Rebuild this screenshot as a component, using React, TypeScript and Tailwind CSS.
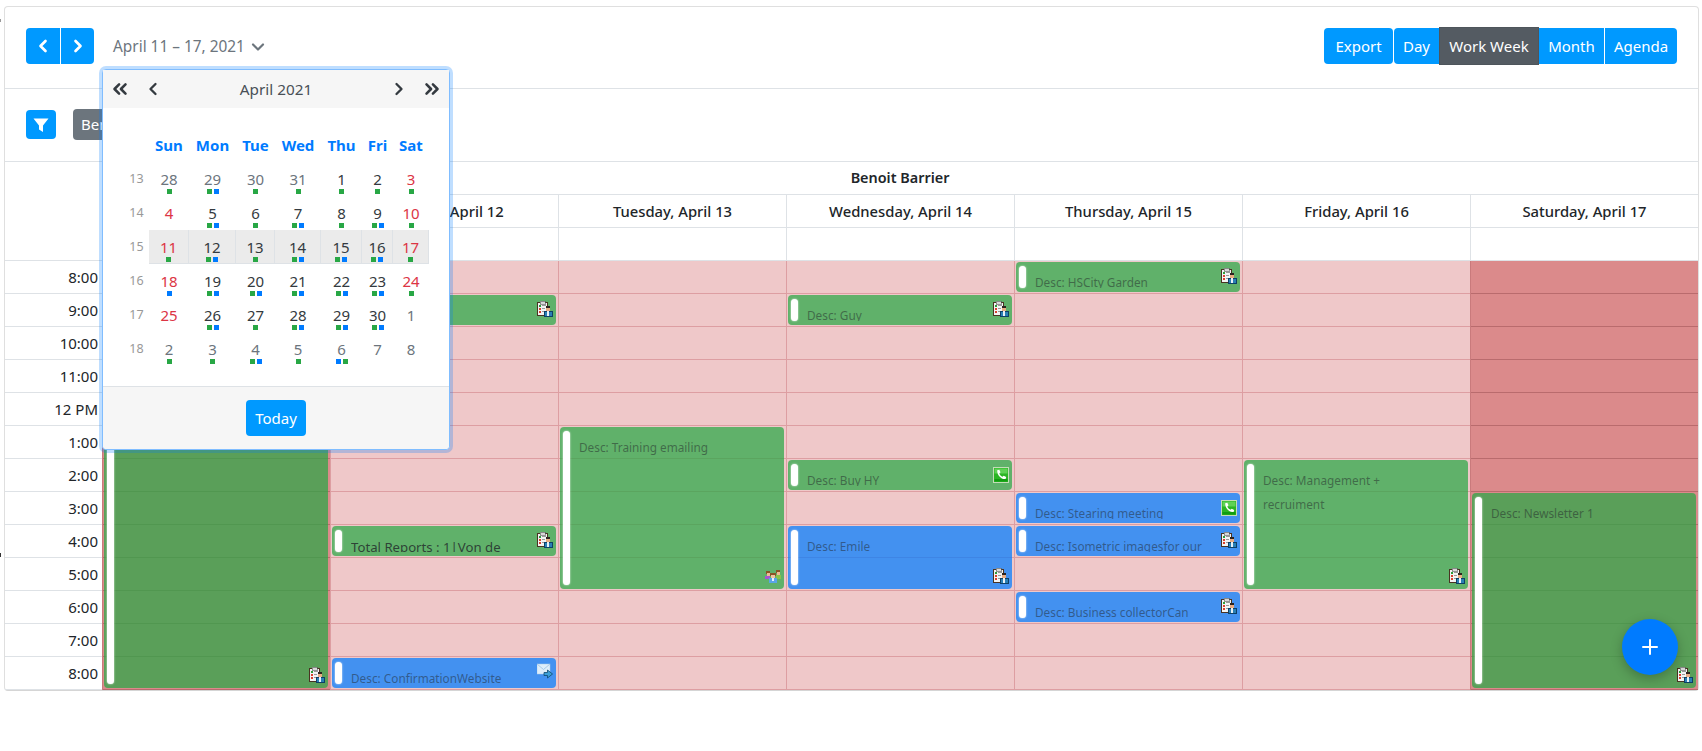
import React from "react";
import { ChevronLeft, ChevronRight, ChevronDown, ChevronsLeft, ChevronsRight, Plus } from "lucide-react";

const FONT = "font-['Noto_Sans','Open_Sans',sans-serif]";

function ClipboardIcon() {
  return (
    <svg width="16" height="16" viewBox="0 0 16 16" shapeRendering="crispEdges">
      <rect x="0" y="1" width="11" height="14" fill="#4a3322" />
      <rect x="1" y="2" width="9" height="12" fill="#f4f4f4" />
      <rect x="3" y="0" width="5" height="3" fill="#d8d8d8" stroke="#555" strokeWidth="0.6" />
      <rect x="2" y="4" width="2" height="2" fill="#2e9b3a" />
      <rect x="5" y="4" width="4" height="1" fill="#9a9a9a" />
      <rect x="2" y="7" width="2" height="2" fill="#d8402f" />
      <rect x="5" y="7" width="3" height="1" fill="#9a9a9a" />
      <rect x="2" y="10" width="2" height="2" fill="#d8402f" />
      <rect x="5" y="10" width="3" height="1" fill="#9a9a9a" />
      <rect x="9" y="5" width="4" height="2" fill="#2c2320" />
      <rect x="9" y="7" width="4" height="3" fill="#e9ad84" />
      <rect x="7" y="10" width="9" height="6" fill="#0d3f66" />
      <rect x="8" y="11" width="7" height="4" fill="#2a7fb5" />
      <rect x="10" y="10" width="2" height="5" fill="#e8f1f7" />
    </svg>
  );
}

function PhoneIcon() {
  return (
    <svg width="16" height="16" viewBox="0 0 16 16">
      <rect x="0.5" y="0.5" width="15" height="15" fill="#2bb524" stroke="#c4dcb8" />
      <rect x="1.5" y="1.5" width="13" height="5" fill="#5fd255" />
      <rect x="1.5" y="12" width="13" height="2.5" fill="#119c10" />
      <path d="M4.2 3.2 L6.3 2.7 L7.5 5.3 L6.3 6.4 C6.8 7.7 8 9 9.5 9.8 L10.7 8.7 L13.2 9.9 L12.6 12 C9 12.9 3.9 8.4 4.2 3.2 Z" fill="#fff" />
    </svg>
  );
}

function MailIcon() {
  return (
    <svg width="16" height="16" viewBox="0 0 16 16">
      <rect x="0" y="1" width="13" height="10" fill="#dfeefa" stroke="#a9cbe8" strokeWidth="0.5" />
      <path d="M0 1 L6.5 6.5 L13 1" fill="none" stroke="#a9cbe8" strokeWidth="1" />
      <path d="M7 9.5 H10.5 V7 L15.5 11 L10.5 15 V12.5 H7 Z" fill="#3d9fd6" stroke="#0d4a6e" strokeWidth="0.8" />
    </svg>
  );
}

function GroupIcon() {
  return (
    <svg width="16" height="14" viewBox="0 0 16 14" shapeRendering="crispEdges">
      <rect x="1" y="1" width="4" height="3" fill="#8a5526" />
      <rect x="2" y="3" width="3" height="3" fill="#eebb95" />
      <rect x="0" y="6" width="5" height="3" fill="#a855d0" />
      <rect x="11" y="0" width="4" height="3" fill="#8a5526" />
      <rect x="12" y="2" width="3" height="3" fill="#eebb95" />
      <rect x="11" y="5" width="5" height="4" fill="#8bc34a" />
      <rect x="5" y="3" width="6" height="3" fill="#8a5526" />
      <rect x="6" y="5" width="4" height="3" fill="#f1c4a0" />
      <rect x="4" y="8" width="8" height="5" fill="#5aa5e6" />
      <rect x="7" y="8" width="2" height="3" fill="#e6f2fc" />
    </svg>
  );
}

type Ev = {
  day: number;
  row: number;
  span: number;
  color: "green" | "blue";
  text?: string;
  strong?: boolean;
  icon: "clip" | "phone" | "mail" | "group";
};

const events: Ev[] = [
  { day: 0, row: 1, span: 12, color: "green", icon: "clip" },
  { day: 1, row: 1, span: 1, color: "green", text: "Desc: Guy", icon: "clip" },
  { day: 1, row: 8, span: 1, color: "green", text: "Total Reports : 1|Von de", strong: true, icon: "clip" },
  { day: 1, row: 12, span: 1, color: "blue", text: "Desc: ConfirmationWebsite", icon: "mail" },
  { day: 2, row: 5, span: 5, color: "green", text: "Desc: Training emailing", icon: "group" },
  { day: 3, row: 1, span: 1, color: "green", text: "Desc: Guy", icon: "clip" },
  { day: 3, row: 6, span: 1, color: "green", text: "Desc: Buy HY", icon: "phone" },
  { day: 3, row: 8, span: 2, color: "blue", text: "Desc: Emile", icon: "clip" },
  { day: 4, row: 0, span: 1, color: "green", text: "Desc: HSCity Garden", icon: "clip" },
  { day: 4, row: 7, span: 1, color: "blue", text: "Desc: Stearing meeting", icon: "phone" },
  { day: 4, row: 8, span: 1, color: "blue", text: "Desc: Isometric imagesfor our", icon: "clip" },
  { day: 4, row: 10, span: 1, color: "blue", text: "Desc: Business collectorCan", icon: "clip" },
  { day: 5, row: 6, span: 4, color: "green", text: "Desc: Management +\nrecruiment", icon: "clip" },
  { day: 6, row: 7, span: 6, color: "green", text: "Desc: Newsletter 1", icon: "clip" },
];

function EventIcon({ ev }: { ev: Ev }) {
  const tall = ev.span > 1;
  const pos = tall ? "bottom-[5px]" : ev.icon === "phone" ? "top-[7px]" : ev.icon === "mail" ? "top-[5px]" : "top-[6px]";
  return (
    <span className={`absolute right-[3px] ${pos}`}>
      {ev.icon === "clip" && <ClipboardIcon />}
      {ev.icon === "phone" && <PhoneIcon />}
      {ev.icon === "mail" && <MailIcon />}
      {ev.icon === "group" && <GroupIcon />}
    </span>
  );
}

function EventBox({ ev }: { ev: Ev }) {
  const bg = ev.color === "green" ? "bg-[#28a745]/[0.72]" : "bg-[#007bff]/[0.72]";
  const tc = ev.strong ? "text-[#212529]/80 text-[13.2px] leading-[26px]" : "text-[#212529]/50 text-[11.8px] leading-[24px]";
  return (
    <div
      className={`absolute left-px w-[224px] rounded-[4px] flex ${bg}`}
      style={{ top: ev.row * 33 + 1, height: ev.span * 33 - 3 }}
    >
      <div className="ml-[3px] mt-[4px] mb-[4px] w-[7px] shrink-0 rounded-[4px] bg-white shadow-[0_0_2px_rgba(255,255,255,0.9)]" />
      <div className={`ml-[9px] mt-[8px] h-[calc(100%-12px)] w-[180px] overflow-hidden whitespace-pre-line ${tc}`}>
        {ev.text}
      </div>
      <EventIcon ev={ev} />
    </div>
  );
}

const hours = ["8:00", "9:00", "10:00", "11:00", "12 PM", "1:00", "2:00", "3:00", "4:00", "5:00", "6:00", "7:00", "8:00"];
const days = [
  "Sunday, April 11",
  "Monday, April 12",
  "Tuesday, April 13",
  "Wednesday, April 14",
  "Thursday, April 15",
  "Friday, April 16",
  "Saturday, April 17",
];

function DayColumn({ idx }: { idx: number }) {
  const dark = idx === 0 || idx === 6;
  return (
    <div className={`relative border-l ${dark ? "border-[#c97a7c] bg-[#db8a8b]" : "border-[#dd9ea2] bg-[#efc8c9]"}`}>
      {hours.map((h, i) => (
        <div key={i} className={`h-[33px] border-b ${dark ? "border-[#b96b6d]" : "border-[#dd9ea2]"}`} />
      ))}
      {events.filter((e) => e.day === idx).map((e, i) => (
        <EventBox key={i} ev={e} />
      ))}
    </div>
  );
}

type Cell = { d: number; k: "n" | "o" | "r"; dots: string };
const weeks: { w: number; cells: Cell[]; active?: boolean }[] = [
  { w: 13, cells: [
    { d: 28, k: "o", dots: "g" }, { d: 29, k: "o", dots: "gb" }, { d: 30, k: "o", dots: "g" }, { d: 31, k: "o", dots: "g" },
    { d: 1, k: "n", dots: "g" }, { d: 2, k: "n", dots: "g" }, { d: 3, k: "r", dots: "g" } ] },
  { w: 14, cells: [
    { d: 4, k: "r", dots: "" }, { d: 5, k: "n", dots: "gb" }, { d: 6, k: "n", dots: "g" }, { d: 7, k: "n", dots: "gb" },
    { d: 8, k: "n", dots: "g" }, { d: 9, k: "n", dots: "gb" }, { d: 10, k: "r", dots: "g" } ] },
  { w: 15, active: true, cells: [
    { d: 11, k: "r", dots: "g" }, { d: 12, k: "n", dots: "gb" }, { d: 13, k: "n", dots: "g" }, { d: 14, k: "n", dots: "gb" },
    { d: 15, k: "n", dots: "gb" }, { d: 16, k: "n", dots: "gb" }, { d: 17, k: "r", dots: "g" } ] },
  { w: 16, cells: [
    { d: 18, k: "r", dots: "b" }, { d: 19, k: "n", dots: "gb" }, { d: 20, k: "n", dots: "gb" }, { d: 21, k: "n", dots: "gb" },
    { d: 22, k: "n", dots: "gb" }, { d: 23, k: "n", dots: "gb" }, { d: 24, k: "r", dots: "g" } ] },
  { w: 17, cells: [
    { d: 25, k: "r", dots: "" }, { d: 26, k: "n", dots: "gb" }, { d: 27, k: "n", dots: "g" }, { d: 28, k: "n", dots: "gb" },
    { d: 29, k: "n", dots: "gb" }, { d: 30, k: "n", dots: "gb" }, { d: 1, k: "o", dots: "" } ] },
  { w: 18, cells: [
    { d: 2, k: "o", dots: "g" }, { d: 3, k: "o", dots: "g" }, { d: 4, k: "o", dots: "gb" }, { d: 5, k: "o", dots: "g" },
    { d: 6, k: "o", dots: "bg" }, { d: 7, k: "o", dots: "" }, { d: 8, k: "o", dots: "" } ] },
];

const dayCols = "grid grid-cols-[25px_40px_47px_39px_46px_41px_31px_36px]";

function DatePopup() {
  return (
    <div className="absolute left-[102px] top-[69px] w-[348px] h-[381px] rounded-[4px] border border-[#80bdff] bg-white shadow-[0_0_0_3px_rgba(0,123,255,0.25)] flex flex-col">
      <div className="h-[38px] bg-[#f6f6f6] flex items-center text-[#343a40]">
        <ChevronsLeft size={22} strokeWidth={2.8} className="ml-[6px]" />
        <ChevronLeft size={20} strokeWidth={2.8} className="ml-[12px]" />
        <span className="flex-1 text-center text-[15.3px] text-[#495057]">April 2021</span>
        <ChevronRight size={20} strokeWidth={2.8} />
        <ChevronsRight size={22} strokeWidth={2.8} className="ml-[12px] mr-[6px]" />
      </div>
      <div className="flex-1 pt-[22px] pl-[21px]">
        <div className={`${dayCols} h-[32px] pb-[2px] items-center text-[15px] font-bold text-[#007bff] text-center`}>
          <span />
          <span>Sun</span><span>Mon</span><span>Tue</span><span>Wed</span><span>Thu</span><span>Fri</span><span>Sat</span>
        </div>
        {weeks.map((wk) => (
          <div key={wk.w} className={`${dayCols} h-[34px]`}>
            <span className="text-[12.5px] text-[#999999] text-center leading-[34px]">{wk.w}</span>
            {wk.cells.map((c, i) => (
              <div
                key={i}
                className={`flex flex-col items-center ${wk.active ? "bg-[#ebebeb] border-r border-b border-[#dee2e6]" : ""}`}
              >
                <span
                  className={`mt-[7px] h-[20px] text-[15px] leading-[20px] ${c.k === "r" ? "text-[#dc3545]" : c.k === "o" ? "text-[#6c757d]" : "text-[#343a40]"}`}
                >
                  {c.d}
                </span>
                <span className="flex gap-[2px]">
                  {c.dots.split("").map((t, j) => (
                    <span key={j} className={`w-[5px] h-[5px] ${t === "g" ? "bg-[#28a745]" : "bg-[#007bff]"}`} />
                  ))}
                </span>
              </div>
            ))}
          </div>
        ))}
      </div>
      <div className="h-[63px] border-t border-[#dee2e6] bg-[#f6f6f6] flex justify-center items-center rounded-b-[4px]">
        <button className="w-[60px] h-[36px] rounded-[4px] bg-[#0099ff] text-white text-[15px]">Today</button>
      </div>
    </div>
  );
}

export default function App() {
  return (
    <div className={`relative w-[1702px] h-[751px] overflow-hidden bg-white text-[#212529] ${FONT}`}>
      <span className="absolute left-0 top-[19px] w-px h-[3px] bg-[#9a9a9a]" />
      <span className="absolute left-0 top-[553px] w-px h-[4px] bg-[#333333]" />
      <div className="ml-[4px] pt-[6px]">
        <div className="w-[1695px] rounded-[4px] border border-[#dfdfdf] border-b-[#d5d5d5]">
          {/* toolbar */}
          <div className="h-[82px] border-b border-[#dee2e6] flex items-start justify-between pl-[21px] pr-[21px] pt-[21px]">
            <div className="flex items-center">
              <div className="flex gap-px">
                <button className="w-[34px] h-[36px] rounded-l-[4px] bg-[#0099ff] text-white flex items-center justify-center">
                  <ChevronLeft size={20} strokeWidth={3.2} />
                </button>
                <button className="w-[33px] h-[36px] rounded-r-[4px] bg-[#0099ff] text-white flex items-center justify-center">
                  <ChevronRight size={20} strokeWidth={3.2} />
                </button>
              </div>
              <span className="ml-[19px] mt-[2px] text-[15.4px] text-[#6c757d]">April 11 – 17, 2021</span>
              <ChevronDown size={20} strokeWidth={2.6} className="ml-[3px] mt-[1px] text-[#6c757d]" />
            </div>
            <div className="flex items-center text-white text-[15px]">
              <button className="w-[69px] h-[36px] rounded-[4px] bg-[#0099ff]">Export</button>
              <button className="ml-px w-[45px] h-[36px] rounded-l-[4px] bg-[#0099ff]">Day</button>
              <button className="w-[100px] h-[38px] -my-px bg-[#545b62] border border-[#4e555b]">Work Week</button>
              <button className="w-[65px] h-[36px] bg-[#0099ff]">Month</button>
              <button className="ml-px w-[72px] h-[36px] rounded-r-[4px] bg-[#0099ff]">Agenda</button>
            </div>
          </div>
          {/* filter row */}
          <div className="h-[73px] border-b border-[#dee2e6] flex items-center pl-[21px] pb-[1px] gap-[17px]">
            <button className="w-[30px] h-[29px] rounded-[4px] bg-[#0099ff] flex items-center justify-center">
              <svg width="16" height="16" viewBox="0 0 16 16">
                <path d="M0.5 1.5 H15.5 L10 8.5 V15 L6 12.5 V8.5 Z" fill="#fff" />
              </svg>
            </button>
            <span className="h-[31px] px-[8px] rounded-[4px] bg-[#6c757d] text-white text-[15px] leading-[31px]">Benoit Barrier</span>
          </div>
          {/* schedule */}
          <div className="flex">
            <div className="w-[97px] shrink-0">
              <div className="h-[99px] border-b border-[#dee2e6]" />
              {hours.map((h, i) => (
                <div key={i} className="h-[33px] border-b border-[#dee2e6] pr-[4px] text-right text-[15px] leading-[32px]">
                  {h}
                </div>
              ))}
            </div>
            <div className="flex-1">
              <div className="h-[33px] border-b border-[#dee2e6] text-center text-[14.4px] font-semibold leading-[32px]">
                Benoit Barrier
              </div>
              <div className="grid grid-cols-7">
                {days.map((d) => (
                  <div key={d} className="h-[33px] border-l border-b border-[#dee2e6] text-center text-[14.8px] font-medium leading-[32px]">
                    {d}
                  </div>
                ))}
              </div>
              <div className="grid grid-cols-7">
                {days.map((d) => (
                  <div key={d} className="h-[33px] border-l border-b border-[#dee2e6]" />
                ))}
              </div>
              <div className="grid grid-cols-7">
                {days.map((d, i) => (
                  <DayColumn key={d} idx={i} />
                ))}
              </div>
            </div>
          </div>
        </div>
      </div>
      <DatePopup />
      <button className="absolute left-[1622px] top-[619px] w-[56px] h-[56px] rounded-full bg-[#007bff] text-white flex items-center justify-center shadow-[0_4px_12px_rgba(0,0,0,0.25)]">
        <Plus size={24} strokeWidth={2} />
      </button>
    </div>
  );
}
